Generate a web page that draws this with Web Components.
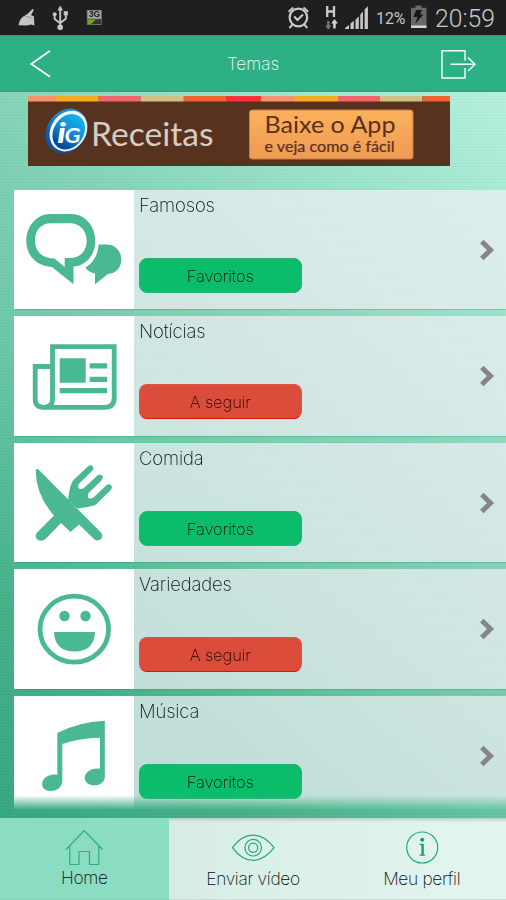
<!DOCTYPE html>
<html lang="pt-BR">
<head>
<meta charset="utf-8">
<title>Temas</title>
<style>
html,body{margin:0;height:100%;overflow:hidden}
</style>
</head>
<body>
<temas-app></temas-app>
<script>
const define = (name, html) => {
  const t = document.createElement('template');
  t.innerHTML = html;
  customElements.define(name, class extends HTMLElement {
    constructor() {
      super();
      this.attachShadow({mode: 'open'}).append(t.content.cloneNode(true));
    }
  });
};

define('status-bar', `
<style>
:host{display:flex;box-sizing:border-box;height:35px;background:#1f1f1f;color:#c9c9c9;font-family:Roboto,sans-serif;font-weight:300;align-items:center;padding:0 7px 0 18px}
svg{display:block;flex:none;overflow:visible}
.gap{flex:1}
.pct{width:30px;margin-left:7px;font-weight:400}
.time{width:64px;margin-left:8px}
</style>
<svg width="86" height="35" viewBox="18 0 86 35">
  <path d="M32.5 9 34 9.700 31 15 34 16.500 34.300 25.500 31 24.500 27 25.500 18.500 25.200Q19.500 18 25 15.500L28 13.500Z" fill="#c6c6c6"/>
  <path d="M25 16 33 18.500" stroke="#888" stroke-width=".8"/>
  <path d="M60.200 27V8M54.600 15v4l5.600 4.300M65.800 14v4.700l-5.600 4.300" fill="none" stroke="#c6c6c6" stroke-width="1.900"/>
  <path d="M60.200 5.500 63 10.500H57.400Z" fill="#c6c6c6"/><circle cx="60.200" cy="27.300" r="2.800" fill="#c6c6c6"/><circle cx="54.700" cy="14.200" r="2" fill="#c6c6c6"/><path d="M63.700 11.200h4.200v4.200h-4.200z" fill="#c6c6c6"/>
  <path d="M86.800 10h15v15h-15z" fill="#6b6b6b"/><path d="M87.500 10.500h13.600v8H87.500z" fill="#a9a9a9"/><path d="M88 19.500h13v4.500H88z" fill="#303828"/><path d="M88 19.500h8l-5 4.500h-3z" fill="#77a900"/>
  <text x="94.500" y="17.400" text-anchor="middle" font-family="Liberation Sans,sans-serif" font-weight="700" font-size="8.500" fill="#1b1b1b">3G</text>
</svg>
<span class="gap"></span>
<svg width="82" height="35" viewBox="287 0 82 35">
  <circle cx="298.400" cy="17.500" r="8.800" fill="none" stroke="#c9c9c9" stroke-width="2.200"/>
  <path d="M294.200 16.500 297.500 20 303 14.500M288.600 11.700 293.300 7.500M308.200 11.700 303.500 7.500M292.500 24.500 289.500 28M304.300 24.500 307.300 28" stroke="#c9c9c9" stroke-width="2" fill="none"/>
  <path d="M327.200 6v11M334 6v11M327.200 11.500H334" stroke="#c9c9c9" stroke-width="2.300"/>
  <path d="M327.200 21h2.300v4.500h2l-3.200 4.300-3.200-4.300h2z" fill="#777"/><path d="M333.200 28.500h2.500v-5h2.300l-3.500-4.500-3.400 4.500h2.100z" fill="#d2d2d2"/>
  <path d="M345 29v-1l4-3v4zM350.500 29v-5.500l3.300-2.700V29zM355.500 29V20l3.300-3.800V29zM360.300 29V14.600l2.600-3V29zM364.600 29V9.500l3.300-3.300V29z" fill="#c9c9c9"/>
</svg>
<span class="pct"><svg width="30" height="35"><text x="0" y="24" font-size="16" textLength="29.500" lengthAdjust="spacingAndGlyphs" fill="#c9c9c9">12%</text></svg></span>
<svg width="16" height="35" viewBox="411 0 16 35" style="margin-left:5px">
  <path d="M415.500 5.500h6v2.300h5v20h-15.500v-20h4.500z" fill="#686868"/><path d="M411 25.500h15.500v2.500H411z" fill="#d5d5d5"/><path d="M416 10h6l-2 4.500h3.500l-8.500 9.500 2.500-7h-4z" fill="#171717"/>
</svg>
<span class="time"><svg width="64" height="35"><text x="0" y="26.500" font-size="26.500" textLength="60" lengthAdjust="spacingAndGlyphs" fill="#c9c9c9">20:59</text></svg></span>`);

define('title-bar', `
<style>
:host{display:grid;grid-template-columns:80px 1fr 80px;align-items:center;box-sizing:border-box;height:57px;background:#2eb086;border-top:1px solid #269f78;border-bottom:1.500px solid #1fa47a;color:#f1fffa;font-size:17.200px}
svg{display:block}
.t{text-align:center}
</style>
<svg width="80" height="54" viewBox="0 36.500 80 54"><path d="M50 50.300 31.300 63.500 50 76.300" fill="none" stroke="#fff" stroke-width="1.700"/></svg>
<div class="t"><slot></slot></div>
<svg width="80" height="54" viewBox="426 36.500 80 54"><path d="M465 60V50.300H442V77.500H465V67.500M450.500 63.700H475M468 57 475 63.700 468 70.500" fill="none" stroke="#f2fffa" stroke-width="1.400"/></svg>`);

define('promo-banner', `
<style>
:host{display:block;width:422px;height:71px;margin:3.500px 0 0 28px}
svg{display:block}
</style>
<svg width="422" height="71" viewBox="28 96 422 71">
  <defs>
    <linearGradient id="b" x1="0" y1="0" x2="0" y2="1"><stop offset="0" stop-color="#fcb15c"/><stop offset="1" stop-color="#ee9a54"/></linearGradient>
    <linearGradient id="g" x1="0" y1="0" x2="0" y2="1"><stop offset="0" stop-color="#16b3ee"/><stop offset=".5" stop-color="#108bd3"/><stop offset="1" stop-color="#073a8b"/></linearGradient>
    <linearGradient id="r" x1="0" y1="0" x2="1" y2="1"><stop offset="0" stop-color="#2da5df"/><stop offset=".45" stop-color="#0b5cab"/><stop offset="1" stop-color="#0e4a97"/></linearGradient>
  </defs>
  <path d="M28 96h422v70H28z" fill="#57331f"/>
  <g>
    <path d="M28 95.800h28v5.700H28zM260.500 95.800h34.500v5.700h-34.500z" fill="#f4936c"/><path d="M56 95.800H98.700v5.700H56zM295 95.800H338v5.700h-43z" fill="#f8ac1f"/><path d="M98.700 95.800H140.500v5.700H98.700zM338 95.800h41.500v5.700h-41.500z" fill="#f3656a"/><path d="M140.500 95.800h43.300v5.700h-43.300zM379.500 95.800h43v5.700h-43z" fill="#cfc186"/><path d="M183.800 95.800H226.500v5.700h-42.700zM422.500 95.800h27.500v5.700h-27.500z" fill="#f2642d"/><path d="M226.500 95.800h34v5.700h-34z" fill="#fb3038"/>
  </g>
  <g transform="rotate(34 67.500 131)">
    <ellipse cx="66.800" cy="131.500" rx="19.500" ry="23.600" fill="url(#r)"/>
    <ellipse cx="68.300" cy="130.500" rx="17.600" ry="21.500" fill="#f3f8fc"/>
    <ellipse cx="69" cy="131" rx="15" ry="18.900" fill="url(#g)"/>
  </g>
  <g font-family="Lato,sans-serif" font-style="italic" font-weight="700" fill="#fff"><text x="57" y="143" font-size="28" textLength="9" lengthAdjust="spacingAndGlyphs">i</text><text x="64.500" y="143" font-size="21" textLength="16" lengthAdjust="spacingAndGlyphs">G</text></g>
  <text x="91" y="145.500" font-family="Lato,sans-serif" font-weight="400" font-size="32.500" textLength="122.500" lengthAdjust="spacingAndGlyphs" fill="#d9ccc3">Receitas</text>
  <rect x="249.500" y="110" width="163.500" height="49" rx="2.500" fill="url(#b)" stroke="#c87f43"/>
  <g fill="#5a301b" font-family="Lato,sans-serif" font-weight="400"><text x="264.500" y="133.300" font-size="23" textLength="131" lengthAdjust="spacingAndGlyphs">Baixe o App</text><text x="264.500" y="151.500" font-size="14.500" textLength="130" lengthAdjust="spacingAndGlyphs" stroke="#5a301b" stroke-width=".2">e veja como é fácil</text></g>
</svg>`);

define('pill-button', `
<style>
:host{display:flex;align-items:center;justify-content:center;box-sizing:border-box;width:162.500px;height:35px;border-radius:8px;background:#0bbd6b;border:1px solid #25b179;font-size:16.500px;letter-spacing:-.12px;color:#04170d;padding-top:1px}
:host([tone=red]){background:#dc4c3a;border-color:#dc5443;border-bottom:1.500px solid #dc1408;color:#1d0704}
</style><slot></slot>`);

define('theme-card', `
<style>
:host{display:grid;grid-template-columns:119.500px 1fr 40px;height:119.600px;box-sizing:border-box;background:linear-gradient(90deg,#fff 119.500px,rgba(241,239,247,.72) 119.500px);box-shadow:-.5px .5px 1px rgba(0,100,70,.2)}
.ic{display:block}
.body{display:flex;flex-direction:column;justify-content:space-between;align-items:flex-start;padding:3px 0 17px 5.500px}
.name{font-size:18.500px;line-height:24px;color:#0c1110;letter-spacing:-.15px}
.chev{align-self:center;width:40px;height:30px}
::slotted(svg){display:block;width:120px;height:120px}
</style>
<div class="ic"><slot name="icon"></slot></div>
<div class="body"><div class="name"><slot name="name"></slot></div><slot name="action"></slot></div>
<svg class="chev" viewBox="0 0 40 30"><path d="M15.800 6.500 24.500 15 15.800 23.500" fill="none" stroke="#858586" stroke-width="5"/></svg>`);

define('nav-item', `
<style>
:host{display:flex;flex:1;flex-direction:column;align-items:center;box-sizing:border-box;height:82px;padding-top:9px;font-size:17.300px;letter-spacing:-.3px;line-height:22px;color:#080c0b;background:linear-gradient(#b9cdc5,#d5eee5 4px,rgba(255,255,255,0) 5px),linear-gradient(90deg,#d6ede5,#ddf2eb);border-bottom:1px solid #cadbd4}
:host([last]){background:linear-gradient(#b9cfc7,#ddf1e9 4px,rgba(255,255,255,0) 5px),linear-gradient(90deg,#ddf2eb,#e3f5ef)}
:host([active]){background:#8adcc2;border-color:#86d4bb}
.l{margin-top:1px}
:host([active]) .l{margin-top:-.5px}
::slotted(svg){display:block;width:44px;height:40px}
</style>
<slot name="icon"></slot><div class="l"><slot></slot></div>`);

define('nav-bar', `<style>:host{display:flex;height:82px}</style><slot></slot>`);

define('temas-app', `
<style>
:host{display:flex;flex-direction:column;width:506px;height:900px;overflow:hidden;font-family:Inter,"Liberation Sans",sans-serif;font-weight:200;
background:repeating-linear-gradient(rgba(0,60,40,.025) 0 1px,rgba(255,255,255,.02) 1px 3.200px),linear-gradient(41deg,#36a77f 7%,#42b187 22%,#6cc8a6 43%,#84d4b8 60%,#b4f1dc 93%)}
.list{flex:1;min-height:0;overflow:hidden;display:flex;flex-direction:column;gap:7px;padding:23px 0 0 14px;margin-bottom:8px;
-webkit-mask-image:linear-gradient(#000 calc(100% - 15px),transparent);mask-image:linear-gradient(#000 calc(100% - 15px),transparent)}
.list theme-card{flex:none}
nav-bar{flex:none}
svg{overflow:visible}
</style>
<status-bar></status-bar>
<title-bar>Temas</title-bar>
<promo-banner></promo-banner>
<div class="list">
  <theme-card>
    <svg slot="icon" viewBox="14 190 120 120"><path fill="#4ab893" fill-rule="evenodd" d="M50 214H71C85 214 95.300 226 95.300 241C95.300 255 86 266 73.500 266.500V284.300L52 267C36 266 26.300 255 26.300 241C26.300 226 37 214 50 214ZM51 223.300C41 223.300 35 230.500 35 240.500C35 251 42 258.500 54.500 258.500L64.700 267V258H70C80 258 86.700 251 86.700 240.500C86.700 230.500 79 223.300 70.500 223.300Z"/><path fill="#4ab893" d="M98.500 244.500H107C115 244.500 121.300 251 121.300 259.500C121.300 268 115.500 273.500 108 274L95 284.300V273.500C91 273 87.500 270.500 85.300 267.500C92.500 263.500 98.300 255 98.500 244.500Z"/></svg>
    <span slot="name">Famosos</span><pill-button slot="action">Favoritos</pill-button>
  </theme-card>
  <theme-card>
    <svg slot="icon" viewBox="14 316 120 120"><path fill="none" stroke="#4ab893" stroke-width="4.800" d="M52.500 366.500H35.200V399Q35.200 407.300 43.500 407.300H105Q114.200 407.300 114.200 398V346.700H52.500V399Q52.500 407.300 43.500 407.300"/><path fill="#4ab893" d="M59.700 358.300h26v24.500h-26zM89.700 363.300H107v5.200H89.700zM89.700 376.700H107v5.200H89.700zM59.700 388H107v5.200H59.700z"/></svg>
    <span slot="name">Notícias</span><pill-button slot="action" tone="red">A seguir</pill-button>
  </theme-card>
  <theme-card>
    <svg slot="icon" viewBox="14 443 120 120"><g fill="#4ab893"><path d="M35.800 470Q36.500 468.500 38.500 469.500L68.300 499.500 77 508.500 101 532.500Q103.500 536 101 539Q98 541.500 94.500 539.500L79 524.500 70.500 532 61 523 46 538.500Q42 542 38 540Q34 537 36.700 533L54 515.500Q35.500 495 35.800 470Z"/><path d="M68 500Q70 483 73.500 480L88 466.200Q91 464 93 466.500Q94 468.500 92.200 470.700L78.800 484Q77 488 80 489Q83 489.500 85 487L98 475Q101 473.500 102.700 476Q103.500 478 101.500 480.500L88.500 493Q87 496 89 498.500Q91.500 499 94 497L107 484.700Q110 483.500 111.800 486Q112.500 488 110.500 490.300L96 504.500Q93 506.500 77.500 508.500Z"/></g></svg>
    <span slot="name">Comida</span><pill-button slot="action">Favoritos</pill-button>
  </theme-card>
  <theme-card>
    <svg slot="icon" viewBox="14 569 120 120"><ellipse cx="74.300" cy="629.200" rx="34.300" ry="33" fill="none" stroke="#4ab893" stroke-width="4.800"/><circle cx="64.500" cy="616" r="5.200" fill="#4ab893"/><circle cx="85.500" cy="616" r="5.200" fill="#4ab893"/><path d="M54 632H95Q94 651.500 74.500 651.500T54 632Z" fill="#4ab893"/></svg>
    <span slot="name">Variedades</span><pill-button slot="action" tone="red">A seguir</pill-button>
  </theme-card>
  <theme-card>
    <svg slot="icon" viewBox="14 696 120 120"><path fill="#4ab893" d="M57.300 733Q78 722 104.800 720.700V777C104.800 782 100 785.300 94.500 785.300C88.500 785.300 84.700 782 84.700 778C84.700 772 92 767.500 100 768.700V737.700Q79 738 62.300 744V781C62.300 787 57 791 50.500 791C45 791 42.200 788 42.200 784C42.200 777.500 50 773.500 57.300 774.800Z"/></svg>
    <span slot="name">Música</span><pill-button slot="action">Favoritos</pill-button>
  </theme-card>
</div>
<nav-bar>
  <nav-item active><svg slot="icon" viewBox="62.500 827 44 40"><path d="M66.500 849.500 84.700 830.500 103 849.500M70.300 846.500V864.500H79.500V851.500H90V864.500H99.300V846.500" fill="none" stroke="#2bae84" stroke-width="1.200"/></svg>Home</nav-item>
  <nav-item><svg slot="icon" viewBox="231.500 827 44 40"><g fill="none" stroke="#1fa97d" stroke-width="1.200"><path d="M233 847.700C245 831 262 831 274.500 847.700C262 864.500 245 864.500 233 847.700Z"/><circle cx="253.700" cy="847.700" r="8.300"/><circle cx="253.700" cy="847.700" r="4.600"/></g></svg>Enviar vídeo</nav-item>
  <nav-item last><svg slot="icon" viewBox="400 827 44 40"><circle cx="422.200" cy="847.500" r="15.500" fill="none" stroke="#1fa97d" stroke-width="1.200"/><circle cx="422.200" cy="839.700" r="2" fill="#10a073"/><path d="M419.500 844.300h3.300v10.700M419.500 855.200h5.500" fill="none" stroke="#10a073" stroke-width="1.300"/><path d="M422.500 844v11.500" stroke="#10a073" stroke-width="2.200"/></svg>Meu perfil</nav-item>
</nav-bar>`);
</script>
</body>
</html>
